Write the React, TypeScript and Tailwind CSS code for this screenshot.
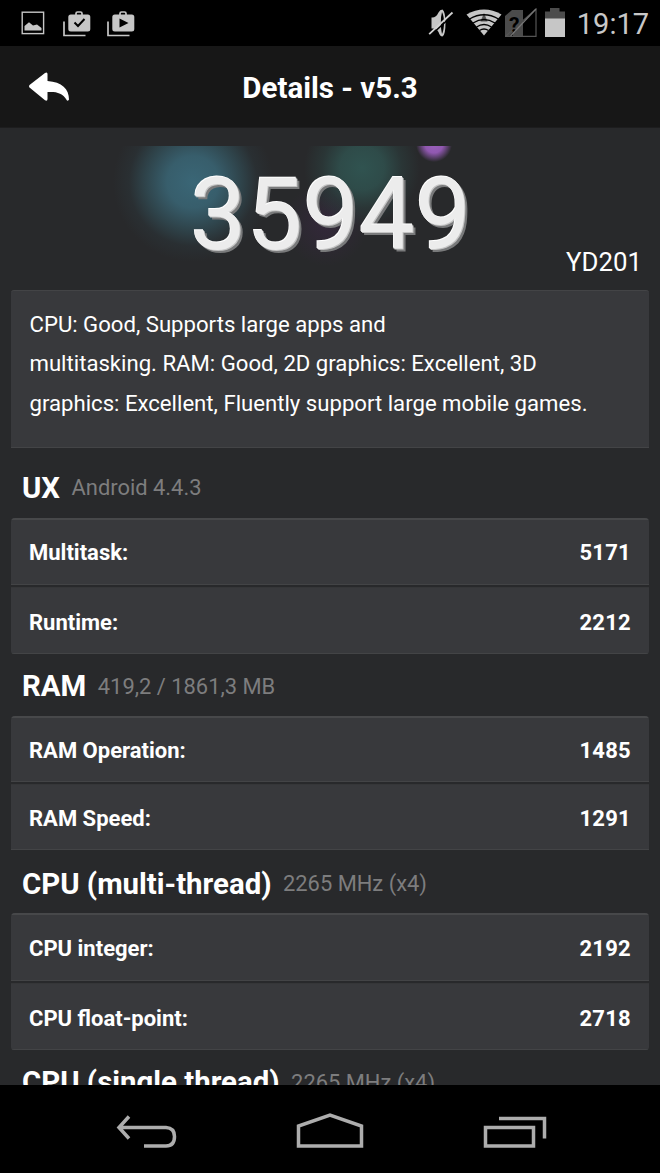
type Row = { label: string; value: string; height: string };

type Section = {
  title: string;
  info: string;
  top: string;
  rounded: string;
  rows: Row[];
};

const sections: Section[] = [
  {
    title: "UX",
    info: "Android 4.4.3",
    top: "h-[70px] pt-[9px]",
    rounded: "rounded-b-[3px]",
    rows: [
      { label: "Multitask:", value: "5171", height: "h-[67px] pt-px" },
      { label: "Runtime:", value: "2212", height: "h-[67px] pt-[4px]" },
    ],
  },
  {
    title: "RAM",
    info: "419,2 / 1861,3 MB",
    top: "h-[62px] pt-[2px]",
    rounded: "",
    rows: [
      { label: "RAM Operation:", value: "1485", height: "h-[66px] pt-[2px]" },
      { label: "RAM Speed:", value: "1291", height: "h-[66px] pt-[2px]" },
    ],
  },
  {
    title: "CPU (multi-thread)",
    info: "2265 MHz (x4)",
    top: "h-[63px] pt-1",
    rounded: "rounded-b-[3px]",
    rows: [
      { label: "CPU integer:", value: "2192", height: "h-[68px] pt-[2px]" },
      { label: "CPU float-point:", value: "2718", height: "h-[67px] pt-[4px]" },
    ],
  },
  {
    title: "CPU (single thread)",
    info: "2265 MHz (x4)",
    top: "h-[63px] pt-px",
    rounded: "",
    rows: [],
  },
];

function PictureIcon() {
  return (
    <svg className="h-6 w-6" viewBox="0 0 24 24" fill="none">
      <rect x="1.2" y="1.2" width="21.4" height="21.4" stroke="#c6c6c6" strokeWidth="1.4" />
      <path d="M3.5 19.5V15L8 11.2L12 14.5L16 13.5L20.5 17V19.5Z" fill="#c6c6c6" />
    </svg>
  );
}

function StoreIcon({ play = false }: { play?: boolean }) {
  return (
    <svg className="h-7 w-7" viewBox="0 0 28 28" fill="none">
      <path d="M1 12.5V26.5H22.5" stroke="#c6c6c6" strokeWidth="1.7" />
      <path d="M13 6V4.5Q13 3 14.500 3H17.5Q19 3 19 4.5V6" stroke="#c6c6c6" strokeWidth="1.7" />
      <rect x="5.3" y="5.5" width="22" height="17" rx="2.5" fill="#c6c6c6" />
      {play ? (
        <path d="M12.5 9.5V18.5L21.5 14Z" fill="#000" />
      ) : (
        <path d="M11.5 13.5L15 17L21.5 10" stroke="#000" strokeWidth="2" />
      )}
    </svg>
  );
}

function MuteIcon() {
  return (
    <svg className="h-[30px] w-[26px]" viewBox="0 0 26 30" fill="none">
      <path d="M3.5 9.5Q8 10 10.5 4.5Q12 1.5 14.5 1.5Q17.5 4 17.5 15Q17.5 27 14.5 28.5Q12 28.5 10.5 24Q8.5 20 3.5 20.5Z" fill="#c6c6c6" />
      <path d="M14 4Q16 8 16 15Q16 22 14 26Q12.8 21 12.8 15Q12.8 8 14 4Z" fill="#000" />
      <path d="M2 28L25 7" stroke="#000" strokeWidth="1.6" />
      <path d="M1.2 26.2L24.5 4.5" stroke="#d2d2d2" strokeWidth="1.8" />
    </svg>
  );
}

function WifiIcon() {
  return (
    <svg className="h-[30px] w-9" viewBox="0 0 36 30" fill="none">
      <path d="M.5 6.5Q18 -3.5 35.5 6.5L18 27.5Z" fill="#c6c6c6" />
      <path d="M18 5L21.5 13.5H14.5Z" fill="#555" />
      <path d="M3.5 11Q18 2.5 32.5 11M7 15Q18 8 29 15M10.5 19Q18 14 25.5 19M13.5 22.5Q18 19.5 22.5 22.5" stroke="#000" strokeWidth="1.4" />
    </svg>
  );
}

function SignalIcon() {
  return (
    <svg className="h-[30px] w-8" viewBox="0 0 32 30">
      <path d="M0 8L7 2H18V13L4.5 28H0Z" fill="#4b4b4b" />
      <path d="M.5 28.3L31 1V28.3Z" fill="none" stroke="#555" strokeWidth="1.2" />
      <path d="M8 16.5V28H18V5Z" fill="#4b4b4b" />
      <text x="9.2" y="23.5" textAnchor="middle" fill="#000" className="font-[Roboto] text-[21px] font-bold">?</text>
      <path d="M5.5 28L31 1" stroke="#777" strokeWidth="1.2" />
    </svg>
  );
}

function BatteryIcon() {
  return (
    <svg className="h-[30px] w-5" viewBox="0 0 20 30">
      <path d="M0 3.5H5V0H14.5V3.5H20V11H0Z" fill="#4c4c4c" />
      <path d="M0 10.5H20V29H0Z" fill="#c6c6c6" />
    </svg>
  );
}

function StatusBar() {
  return (
    <div className="flex h-[46px] shrink-0 items-center justify-between bg-black pl-[21px] pr-[11px]">
      <div className="flex items-center">
        <PictureIcon />
        <div className="ml-[18px]">
          <StoreIcon />
        </div>
        <div className="ml-4">
          <StoreIcon play />
        </div>
      </div>
      <div className="flex items-center">
        <MuteIcon />
        <div className="ml-3">
          <WifiIcon />
        </div>
        <div className="ml-[3px]">
          <SignalIcon />
        </div>
        <div className="ml-2">
          <BatteryIcon />
        </div>
        <span className="ml-3 pt-[3px] text-[29px] leading-[43px] text-[#c8c8c8]">19:17</span>
      </div>
    </div>
  );
}

function Header() {
  return (
    <header className="grid h-[82px] shrink-0 grid-cols-[1fr_auto_1fr] items-center border-b border-[#1d1d1e] bg-[#171717]">
      <svg className="ml-7 mt-px h-[30px] w-[42px]" viewBox="0 0 42 30" fill="#fff">
        <path d="M1.5 13Q.6 14.5 1.5 15.5L17 28.3Q19.5 29.5 19.5 27V20C28 19.5 34.5 20.5 39 28.5Q40.5 29 41 27.5C41 17 34 10 19.5 9V2Q19.5 -.5 17 1Z" />
      </svg>
      <h1 className="pt-1 text-[29.5px] font-bold text-white">Details - v5.3</h1>
    </header>
  );
}

function Score() {
  return (
    <div className="flex h-[162px] shrink-0 flex-col pt-[18px]">
      <div className="flex h-[144px] flex-col bg-[radial-gradient(circle_at_434px_-2px,#9b62bd_0,#9058b0_9px,#9b62bd00_18px),radial-gradient(circle_at_193px_36px,#3a6676_0,#396372e8_26px,#34586390_48px,#2f454d38_64px,#28292b00_80px),radial-gradient(circle_at_362px_22px,#305350_0,#305350d0_22px,#2c424180_40px,#28292b00_58px),radial-gradient(circle_at_326px_78px,#33283a_0,#28292b00_42px)]">
        <div className="h-[117px] pl-[190px] pt-[9px] text-[100px] leading-[120px] text-[#ececec] [text-shadow:-0.7px_-0.7px_0_#ffffff,1px_1px_0_#c4c4c4,3px_3px_0_#797a7b]">
          35949
        </div>
        <div className="-mt-[18px] pr-[18px] text-right text-[25.8px] leading-[34px] text-white">YD201</div>
      </div>
    </div>
  );
}

function ResultSection({ section }: { section: Section }) {
  return (
    <section className="shrink-0">
      <h2 className={`${section.top} flex items-center pl-[11px]`}>
        <span className="text-[29.4px] leading-9 font-bold text-white">{section.title}</span>
        <span className="ml-[11.5px] pt-px text-[21.9px] leading-9 text-[#7d7d7e]">{section.info}</span>
      </h2>
      {section.rows.length > 0 && (
        <div className={`${section.rounded} flex flex-col gap-[2px] overflow-hidden rounded-t-[4px] bg-[#28292b]`}>
          {section.rows.map((row, i) => (
            <div
              key={row.label}
              className={`${row.height} ${i === 0 ? "border-t-2 border-t-[#47484a]" : "border-t border-t-[#353638]"} flex items-center justify-between border-b border-b-[#434446] bg-[#38393c] px-[18px] text-[22px] font-bold text-white`}
            >
              <span>{row.label}</span>
              <span className="tracking-[0.25px]">{row.value}</span>
            </div>
          ))}
        </div>
      )}
    </section>
  );
}

function NavBar() {
  return (
    <nav className="flex h-[88px] shrink-0 items-center bg-black pl-[115px] pt-px">
      <svg className="h-10 w-[432px]" viewBox="0 0 432 40" fill="none" stroke="#adadad" strokeWidth="3.5">
        <path d="M14 6.5L4 17.5L14 28.5M4 17.5H51Q59.5 18 59.5 26.5Q59.5 36 51 36H29" />
        <path d="M183.5 36V16L215 5L246.5 16V36Z" />
        <path d="M370.5 17.5H418.5V36H370.5Z" />
        <path d="M384 8.5H429.5V28.5" />
      </svg>
    </nav>
  );
}

export default function App() {
  return (
    <div className="flex h-[1173px] w-[660px] flex-col overflow-hidden bg-[#28292b] font-[Roboto,sans-serif]">
      <StatusBar />
      <Header />
      <main className="flex h-[957px] shrink-0 flex-col overflow-hidden">
        <Score />
        <div className="flex flex-col px-[11px]">
          <p className="h-[158px] rounded-t-[3px] border-t border-b border-[#434446] bg-[#38393c] pl-[18.5px] pt-[13.5px] text-[22.15px] leading-[39.5px] text-white">
            CPU: Good, Supports large apps and
            <br />
            multitasking. RAM: Good, 2D graphics: Excellent, 3D
            <br />
            graphics: Excellent, Fluently support large mobile games.
          </p>
          {sections.map((section) => (
            <ResultSection key={section.title} section={section} />
          ))}
        </div>
      </main>
      <NavBar />
    </div>
  );
}
